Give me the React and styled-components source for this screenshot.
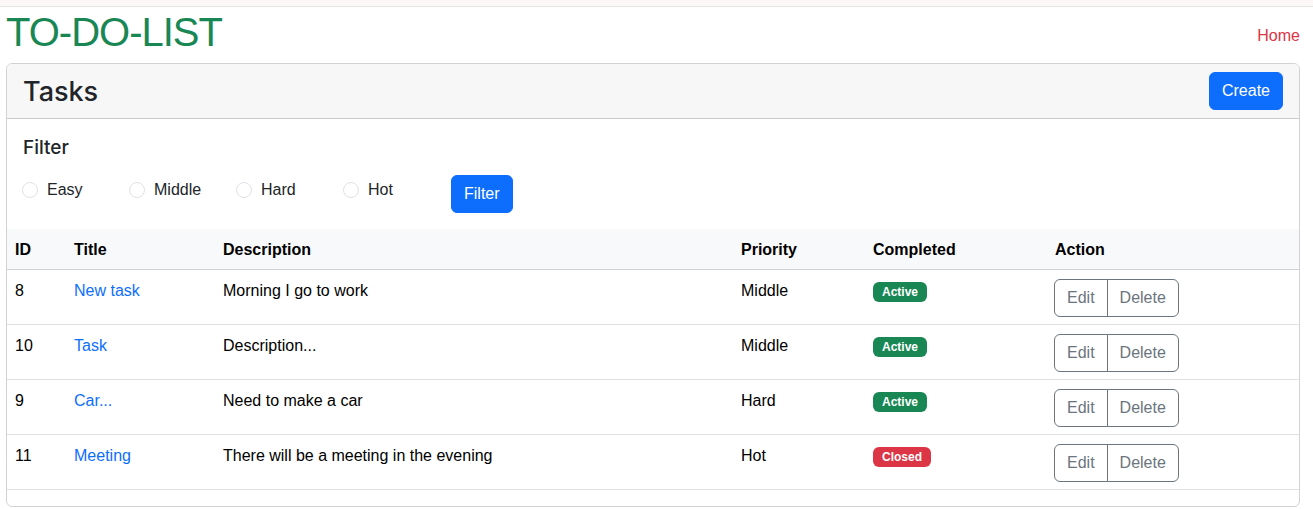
import React from "react";
import styled, { createGlobalStyle } from "styled-components";

const GlobalStyle = createGlobalStyle`
  body {
    margin: 0;
    font-family: "Liberation Sans", Arial, sans-serif;
    font-size: 16px;
    line-height: 1.5;
    color: #212529;
    background: #fff;
  }
  * { box-sizing: border-box; }
`;

const tasks = [
  { id: 8, title: "New task", description: "Morning I go to work", priority: "Middle", active: true },
  { id: 10, title: "Task", description: "Description...", priority: "Middle", active: true },
  { id: 9, title: "Car...", description: "Need to make a car", priority: "Hard", active: true },
  { id: 11, title: "Meeting", description: "There will be a meeting in the evening", priority: "Hot", active: false },
];

const levels = ["Easy", "Middle", "Hard", "Hot"];

export default function App() {
  return (
    <>
      <GlobalStyle />
      <TopStrip />
      <Page>
        <Header>
          <Logo>TO-DO-LIST</Logo>
          <HomeLink href="#">Home</HomeLink>
        </Header>
        <Card>
          <CardHeader>
            <CardTitle>Tasks</CardTitle>
            <Button type="button">Create</Button>
          </CardHeader>
          <CardBody>
            <FilterTitle>Filter</FilterTitle>
            <FilterRow onSubmit={(event) => event.preventDefault()}>
              {levels.map((level) => (
                <RadioLabel key={level}>
                  <Radio type="radio" name="level" value={level} />
                  {level}
                </RadioLabel>
              ))}
              <Button type="submit">Filter</Button>
            </FilterRow>
          </CardBody>
          <Table>
            <thead>
              <tr>
                <Th $width={59}>ID</Th>
                <Th $width={149}>Title</Th>
                <Th $width={518}>Description</Th>
                <Th $width={132}>Priority</Th>
                <Th $width={182}>Completed</Th>
                <Th>Action</Th>
              </tr>
            </thead>
            <tbody>
              {tasks.map((task) => (
                <tr key={task.id}>
                  <Td>{task.id}</Td>
                  <Td>
                    <TaskLink href="#">{task.title}</TaskLink>
                  </Td>
                  <Td>{task.description}</Td>
                  <Td>{task.priority}</Td>
                  <Td>
                    <Badge $active={task.active}>{task.active ? "Active" : "Closed"}</Badge>
                  </Td>
                  <Td>
                    <ButtonGroup>
                      <OutlineButton type="button">Edit</OutlineButton>
                      <OutlineButton type="button">Delete</OutlineButton>
                    </ButtonGroup>
                  </Td>
                </tr>
              ))}
            </tbody>
          </Table>
        </Card>
      </Page>
    </>
  );
}

const TopStrip = styled.div`
  height: 7px;
  background: #fcf8f8;
  border-bottom: 1px solid #e6e3e3;
`;

const Page = styled.div`
  padding: 1px 13px 0 6px;
`;

const Header = styled.header`
  display: flex;
  justify-content: space-between;
  align-items: center;
  margin-bottom: 7px;
`;

const Logo = styled.h1`
  margin: 0;
  font-size: 40px;
  font-weight: 400;
  line-height: 48px;
  letter-spacing: -1px;
  color: #198754;
`;

const HomeLink = styled.a`
  color: #dc3545;
  text-decoration: none;
  padding-top: 7px;
`;

const Card = styled.div`
  border: 1px solid rgba(0, 0, 0, 0.175);
  border-radius: 6px;
  overflow: hidden;
`;

const CardHeader = styled.div`
  display: flex;
  justify-content: space-between;
  align-items: center;
  padding: 8px 16px;
  background: #f7f7f7;
  border-bottom: 1px solid rgba(0, 0, 0, 0.175);
`;

const CardTitle = styled.h3`
  margin: 0;
  padding-top: 2px;
  font-family: Inter, "Liberation Sans", sans-serif;
  font-size: 27px;
  font-weight: 500;
  line-height: 1.2;
`;

const Button = styled.button`
  font-family: inherit;
  font-size: 16px;
  line-height: 24px;
  padding: 6px 12px;
  color: #fff;
  background: #0d6efd;
  border: 1px solid #0d6efd;
  border-radius: 6px;
  cursor: pointer;
`;

const CardBody = styled.div`
  padding: 16px;
`;

const FilterTitle = styled.h5`
  margin: 0 0 16px;
  padding-top: 1px;
  font-family: Inter, "Liberation Sans", sans-serif;
  font-size: 19px;
  font-weight: 500;
  line-height: 23px;
`;

const FilterRow = styled.form`
  display: flex;
  align-items: flex-start;
  margin: 0;
`;

const RadioLabel = styled.label`
  display: flex;
  align-items: center;
  gap: 9px;
  width: 107px;
  padding-top: 3px;
`;

const Radio = styled.input`
  appearance: none;
  width: 16px;
  height: 16px;
  margin: 0 0 0 -1px;
  border: 1px solid #dee2e6;
  border-radius: 50%;
  background: #fff;
`;

const Table = styled.table`
  width: 100%;
  table-layout: fixed;
  border-collapse: collapse;
  margin-bottom: 16px;
`;

const Th = styled.th`
  width: ${(p) => (p.$width ? `${p.$width}px` : "auto")};
  padding: 9px 8px 7px;
  text-align: left;
  font-weight: 700;
  color: #000;
  background: #f8f9fa;
  border-bottom: 1px solid #cfd3d7;
`;

const Td = styled.td`
  padding: 9px 8px 7px;
  vertical-align: top;
  color: #000;
  border-bottom: 1px solid #dee2e6;
`;

const TaskLink = styled.a`
  color: #0d6efd;
  text-decoration: none;
`;

const Badge = styled.span`
  display: inline-block;
  padding: 4px 9px;
  font-size: 12px;
  font-weight: 700;
  line-height: 1;
  color: #fff;
  border-radius: 6px;
  background: ${(p) => (p.$active ? "#198754" : "#dc3545")};
`;

const ButtonGroup = styled.div`
  display: inline-flex;
  margin-left: -1px;
`;

const OutlineButton = styled.button`
  font-family: inherit;
  font-size: 16px;
  line-height: 24px;
  padding: 6px 12px;
  color: #6c757d;
  background: transparent;
  border: 1px solid #6c757d;
  cursor: pointer;

  &:first-child {
    border-radius: 6px 0 0 6px;
  }

  & + & {
    margin-left: -1px;
    border-radius: 0 6px 6px 0;
  }
`;
